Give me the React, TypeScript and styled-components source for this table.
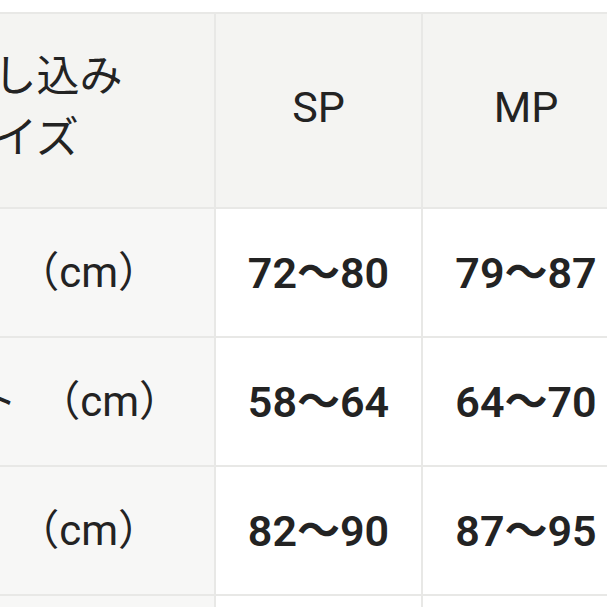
import styled, { createGlobalStyle } from "styled-components";

const GlobalStyle = createGlobalStyle`
  html, body {
    margin: 0;
    padding: 0;
    background: #ffffff;
    overflow: hidden;
  }
  body {
    font-family: Roboto, "Noto Sans CJK JP", sans-serif;
    color: #232323;
  }
`;

// en space between the label and the unit, as in the source chart
const rows = [
  { label: "バスト\u2002（cm）", sp: "72～80", mp: "79～87" },
  { label: "ウエスト\u2002（cm）", sp: "58～64", mp: "64～70" },
  { label: "ヒップ\u2002（cm）", sp: "82～90", mp: "87～95" },
  { label: "身長\u2002（cm）", sp: "145～155", mp: "150～160" },
];

const App = () => {
  return (
    <>
      <GlobalStyle />
      <Page>
        <SizeTable>
          <colgroup>
            <col style={{ width: 400 }} />
            <col style={{ width: 207 }} />
            <col style={{ width: 208 }} />
          </colgroup>
          <thead>
            <HeadRow>
              <HeadCell>
                お申し込み
                <br />
                サイズ
              </HeadCell>
              <HeadCell>SP</HeadCell>
              <HeadCell>MP</HeadCell>
            </HeadRow>
          </thead>
          <tbody>
            {rows.map((row) => (
              <BodyRow key={row.label}>
                <LabelCell>{row.label}</LabelCell>
                <ValueCell>{row.sp}</ValueCell>
                <ValueCell>{row.mp}</ValueCell>
              </BodyRow>
            ))}
          </tbody>
        </SizeTable>
      </Page>
    </>
  );
};

export default App;

const Page = styled.div`
  padding-top: 12px;
  margin-left: -186px;
`;

const SizeTable = styled.table`
  border-collapse: collapse;
  table-layout: fixed;
  width: 815px;
`;

const HeadRow = styled.tr`
  height: 195px;
`;

const BodyRow = styled.tr`
  height: 129px;
`;

const cellBase = `
  border: 2px solid #e8e8e6;
  text-align: center;
  vertical-align: middle;
  padding: 0 0 8px;
  font-size: 43px;
  color: #232323;
  white-space: nowrap;
`;

const HeadCell = styled.th`
  ${cellBase}
  background: #f4f4f2;
  font-weight: 400;
  line-height: 62px;
`;

const LabelCell = styled.td`
  ${cellBase}
  background: #f7f7f6;
  font-weight: 400;
  font-size: 42px;
`;

const ValueCell = styled.td`
  ${cellBase}
  background: #ffffff;
  font-weight: 600;
`;
